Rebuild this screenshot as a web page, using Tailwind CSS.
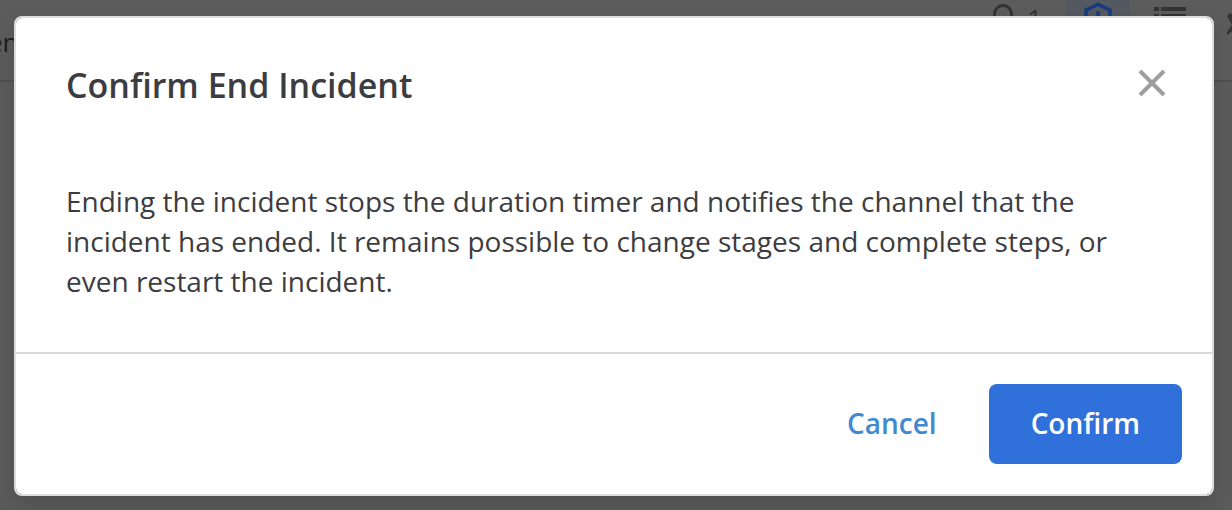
<!DOCTYPE html>
<html lang="en">
<head>
<meta charset="utf-8">
<meta name="viewport" content="width=device-width, initial-scale=1">
<title>Confirm End Incident</title>
<script src="https://cdn.jsdelivr.net/npm/@tailwindcss/browser@4"></script>
</head>
<body class="min-h-screen overflow-hidden bg-[#5b5b5b] font-['Open_Sans',sans-serif] text-[#3d3c40]">
  <!-- Channel header behind the dialog -->
  <header class="flex h-[82px] items-start justify-between overflow-hidden border-b-2 border-[#4f4f4f] bg-[#5c5c5c]" aria-hidden="true">
    <span class="-ml-3 mt-[22px] text-[26px] leading-10 text-[#1f1f1f]">en</span>
    <div class="-mr-[18px] flex items-start text-[#333333]">
      <svg class="mr-3 h-9 w-6" viewBox="0 0 24 36" fill="none" stroke="currentColor" stroke-width="3"><path d="M3.500 18v-4a8.500 8.500 0 0 1 17 0v4"/></svg>
      <span class="mr-6 mt-0.5 text-[26px] leading-8">1</span>
      <span class="flex h-[60px] w-16 justify-center bg-[#535861]">
        <svg class="h-9 w-8" viewBox="0 0 32 36" fill="none" stroke="#173a80" stroke-width="3.500"><path d="M4 26V10L16 4.500 28 10v16M16 11v12"/></svg>
      </span>
      <svg class="ml-6 h-9 w-8" viewBox="0 0 32 36" fill="currentColor"><path d="M0 7h5v4H0zM7 7h25v4H7zM0 14h5v4H0zM7 14h25v4H7z"/></svg>
      <svg class="ml-10 mt-3 h-6 w-6" viewBox="0 0 24 24" fill="currentColor"><path d="M1 4l3-3 18 11-14 6-7 5 0-3 5-7z"/></svg>
    </div>
  </header>

  <div class="absolute inset-0 pl-3.5 pr-[18px] pt-4">
    <section role="dialog" aria-modal="true" aria-labelledby="dialog-title" aria-describedby="dialog-text" class="rounded-lg border-2 border-[#dddddd] bg-white bg-clip-padding shadow-[0_10px_20px_rgba(0,0,0,0.12)]">
      <div class="flex items-center justify-between pl-[50px] pr-11 pt-[43px]">
        <h1 id="dialog-title" class="text-[34px] font-semibold leading-12">Confirm End Incident</h1>
        <button type="button" aria-label="Close" class="-mt-1 text-[#9e9da0]">
          <svg class="size-8" viewBox="0 0 32 32" fill="none" stroke="currentColor" stroke-width="4"><path d="M4 4l24 24M28 4L4 28"/></svg>
        </button>
      </div>
      <p id="dialog-text" class="px-[50px] pb-[51px] pt-18 text-[28px] leading-10">Ending the incident stops the duration timer and notifies the channel that the incident has ended. It remains possible to change stages and complete steps, or even restart the incident.</p>
      <div class="flex justify-end gap-2.5 border-t-2 border-[#d8d8d8] p-[30px]">
        <button type="button" class="h-20 rounded-lg px-[42px] pb-0.5 text-[28px] font-semibold text-[#4389d2]">Cancel</button>
        <button type="button" class="h-20 rounded-lg bg-[#2f70da] px-[42px] pb-0.5 text-[28px] font-semibold text-white">Confirm</button>
      </div>
    </section>
  </div>
</body>
</html>
